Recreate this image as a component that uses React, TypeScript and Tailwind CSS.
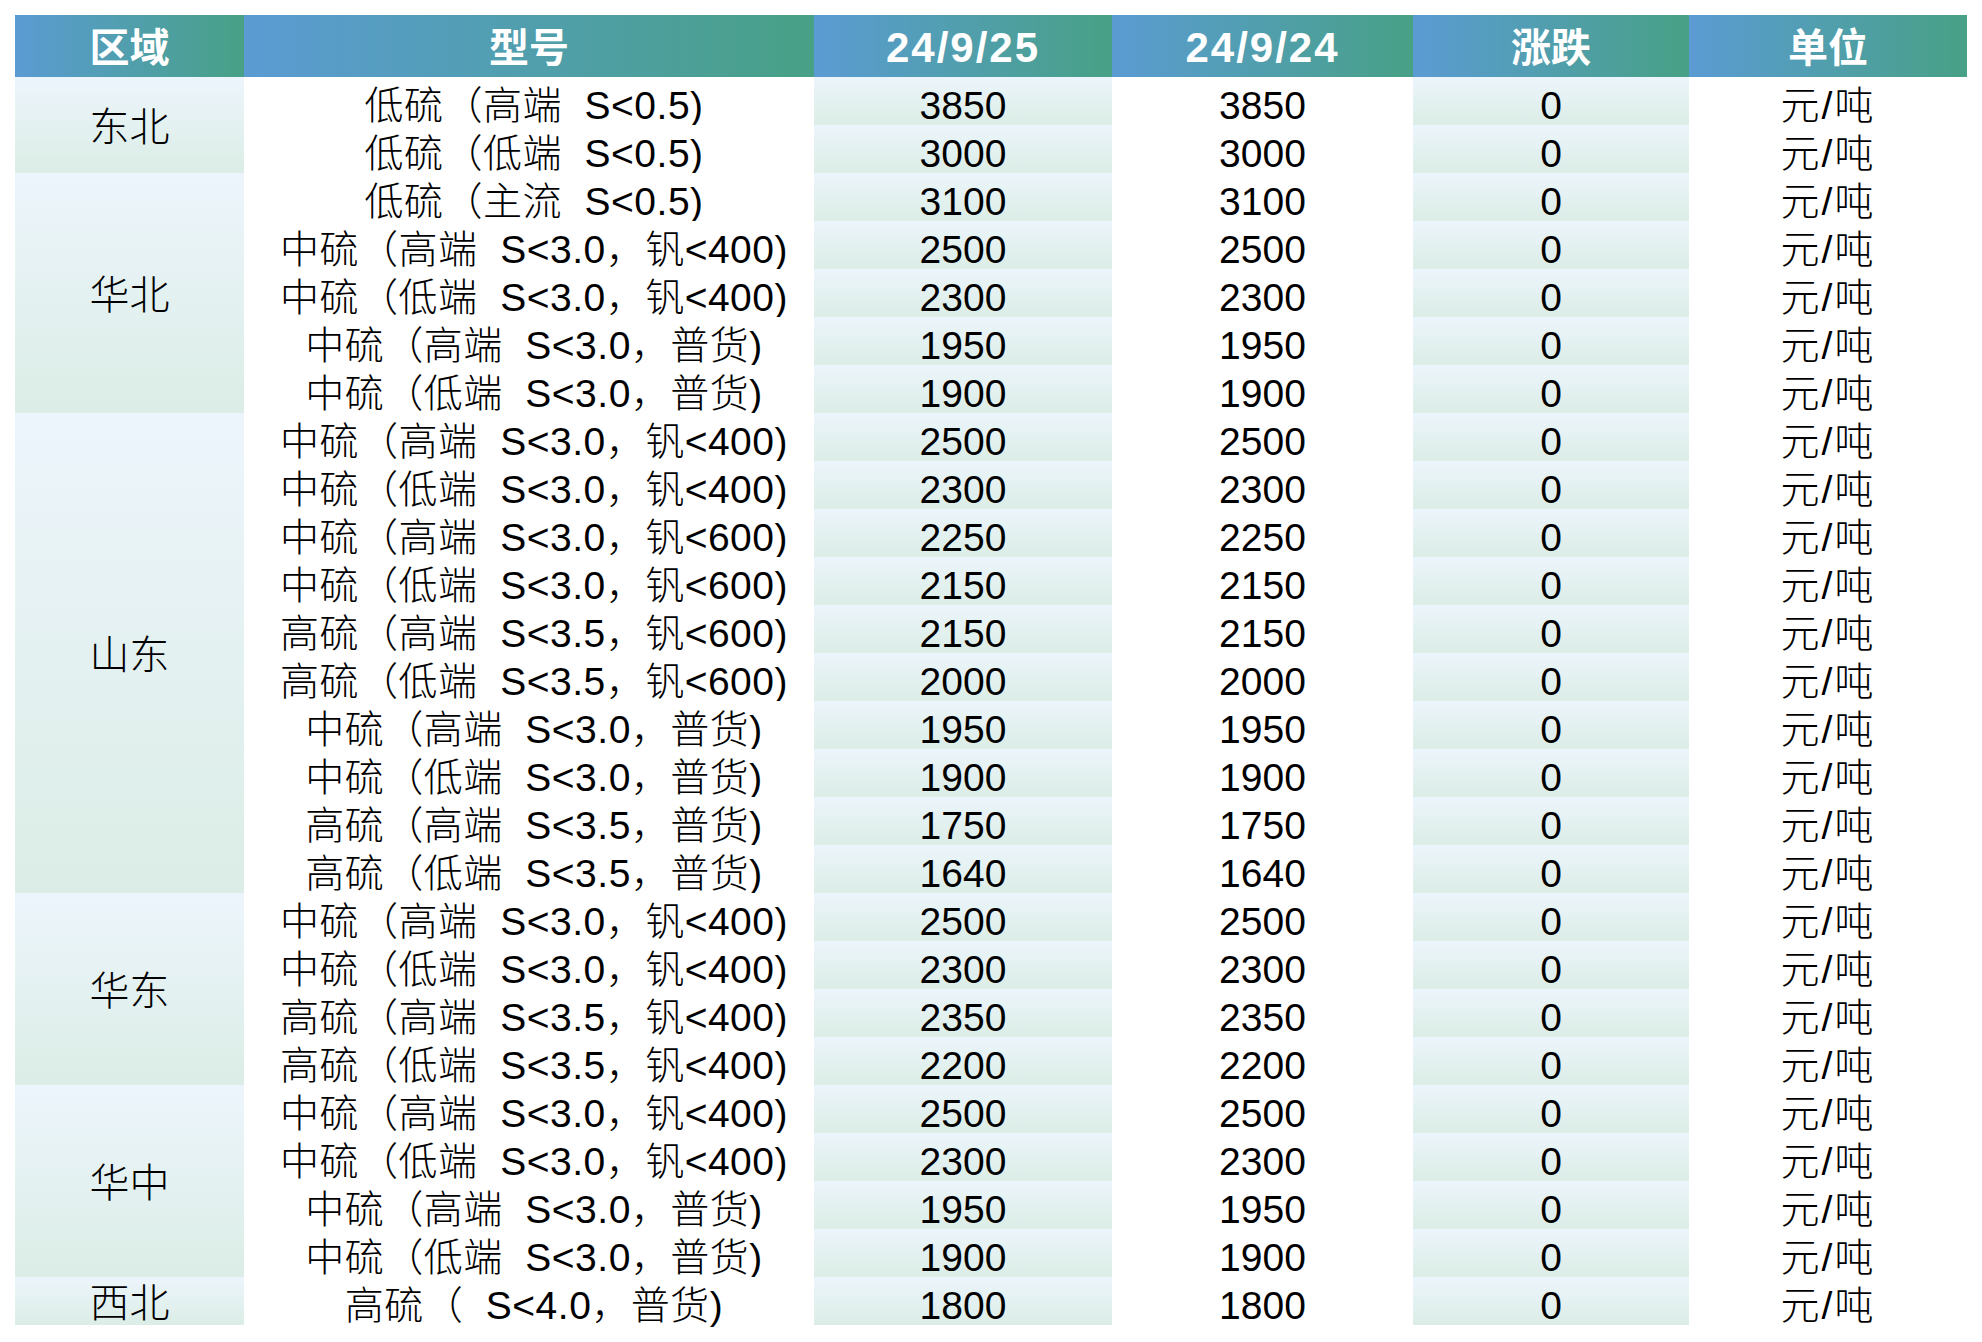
const HEAD_BG = 'bg-linear-to-r from-[#5b9bd3] to-[#48a085]';
const CELL_BG = 'bg-linear-to-b from-[#edf5fc] to-[#dbede6]';

// column widths, left to right
const W = ['w-[229px]', 'w-[570px]', 'w-[298px]', 'w-[301px]', 'w-[276px]', 'w-[278px]'];

const SPAN_H: Record<number, string> = {
  1: 'h-[48px]',
  2: 'h-[96px]',
  4: 'h-[192px]',
  5: 'h-[240px]',
  10: 'h-[480px]',
};

type Row = { model: string; today: number; prev: number };

const M = {
  midHi400: '中硫（高端  S<3.0，钒<400)',
  midLo400: '中硫（低端  S<3.0，钒<400)',
  midHiGen: '中硫（高端  S<3.0，普货)',
  midLoGen: '中硫（低端  S<3.0，普货)',
};

const regions: { name: string; rows: Row[] }[] = [
  {
    name: '东北',
    rows: [
      { model: '低硫（高端  S<0.5)', today: 3850, prev: 3850 },
      { model: '低硫（低端  S<0.5)', today: 3000, prev: 3000 },
    ],
  },
  {
    name: '华北',
    rows: [
      { model: '低硫（主流  S<0.5)', today: 3100, prev: 3100 },
      { model: M.midHi400, today: 2500, prev: 2500 },
      { model: M.midLo400, today: 2300, prev: 2300 },
      { model: M.midHiGen, today: 1950, prev: 1950 },
      { model: M.midLoGen, today: 1900, prev: 1900 },
    ],
  },
  {
    name: '山东',
    rows: [
      { model: M.midHi400, today: 2500, prev: 2500 },
      { model: M.midLo400, today: 2300, prev: 2300 },
      { model: '中硫（高端  S<3.0，钒<600)', today: 2250, prev: 2250 },
      { model: '中硫（低端  S<3.0，钒<600)', today: 2150, prev: 2150 },
      { model: '高硫（高端  S<3.5，钒<600)', today: 2150, prev: 2150 },
      { model: '高硫（低端  S<3.5，钒<600)', today: 2000, prev: 2000 },
      { model: M.midHiGen, today: 1950, prev: 1950 },
      { model: M.midLoGen, today: 1900, prev: 1900 },
      { model: '高硫（高端  S<3.5，普货)', today: 1750, prev: 1750 },
      { model: '高硫（低端  S<3.5，普货)', today: 1640, prev: 1640 },
    ],
  },
  {
    name: '华东',
    rows: [
      { model: M.midHi400, today: 2500, prev: 2500 },
      { model: M.midLo400, today: 2300, prev: 2300 },
      { model: '高硫（高端  S<3.5，钒<400)', today: 2350, prev: 2350 },
      { model: '高硫（低端  S<3.5，钒<400)', today: 2200, prev: 2200 },
    ],
  },
  {
    name: '华中',
    rows: [
      { model: M.midHi400, today: 2500, prev: 2500 },
      { model: M.midLo400, today: 2300, prev: 2300 },
      { model: M.midHiGen, today: 1950, prev: 1950 },
      { model: M.midLoGen, today: 1900, prev: 1900 },
    ],
  },
  {
    name: '西北',
    rows: [{ model: '高硫（  S<4.0，普货)', today: 1800, prev: 1800 }],
  },
];

function HeadCell({ width, children, date = false }: { width: string; children: string; date?: boolean }) {
  return (
    <div className={`${width} ${HEAD_BG} h-full flex items-center justify-center pt-[4px]`}>
      <span className={date ? 'text-[42px] tracking-[2px]' : 'text-[40px]'}>{children}</span>
    </div>
  );
}

function Cell({ width, shaded, children }: { width: string; shaded?: boolean; children: React.ReactNode }) {
  return (
    <div
      className={`${width} ${shaded ? CELL_BG : 'bg-white'} h-full flex items-center justify-center pt-[8px] whitespace-pre`}
    >
      {children}
    </div>
  );
}

export default function App() {
  return (
    <div className="min-h-[1342px] bg-white pt-[15px] pl-[15px] font-['Liberation_Sans','Noto_Sans_CJK_SC',sans-serif] text-black">
      <div className="w-[1952px]">
        <div className="flex h-[62px] text-white font-bold leading-none">
          <HeadCell width={W[0]}>区域</HeadCell>
          <HeadCell width={W[1]}>型号</HeadCell>
          <HeadCell width={W[2]} date>24/9/25</HeadCell>
          <HeadCell width={W[3]} date>24/9/24</HeadCell>
          <HeadCell width={W[4]}>涨跌</HeadCell>
          <HeadCell width={W[5]}>单位</HeadCell>
        </div>

        {regions.map((r) => (
          <div key={r.name} className="flex text-[39px] leading-none font-light">
            <div className={`${W[0]} ${SPAN_H[r.rows.length]} ${CELL_BG} flex items-center justify-center pt-[4px] text-[40px]`}>
              {r.name}
            </div>
            <div className="flex flex-col">
              {r.rows.map((row, i) => (
                <div key={i} className="flex h-[48px]">
                  <Cell width={W[1]}>
                    <span className="pl-[10px] tracking-[0.5px]">{row.model}</span>
                  </Cell>
                  <Cell width={W[2]} shaded>{row.today}</Cell>
                  <Cell width={W[3]}>{row.prev}</Cell>
                  <Cell width={W[4]} shaded>{row.today - row.prev}</Cell>
                  <Cell width={W[5]}>
                    <span className="tracking-[2px]">元/吨</span>
                  </Cell>
                </div>
              ))}
            </div>
          </div>
        ))}
      </div>
    </div>
  );
}
